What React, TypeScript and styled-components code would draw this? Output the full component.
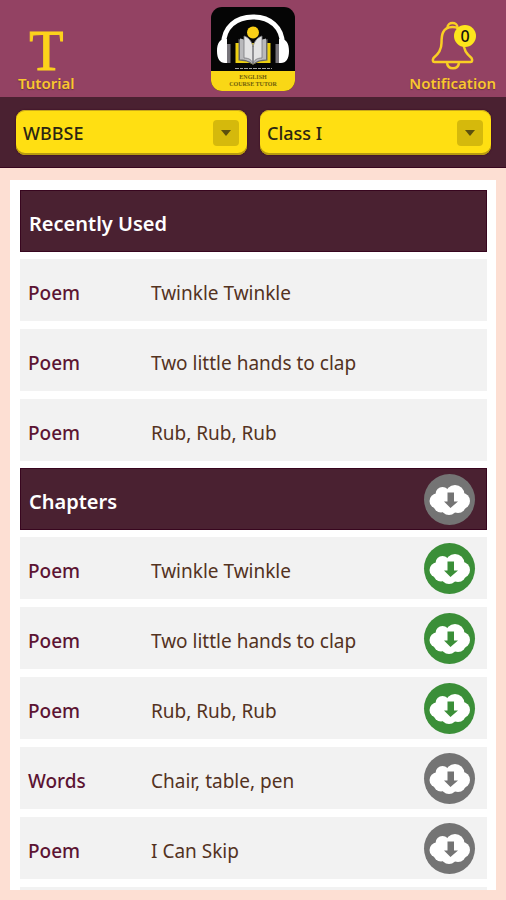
import React from "react";
import styled, { createGlobalStyle } from "styled-components";

const color = {
  plum: "#934263",
  wine: "#4a2131",
  wineEdge: "#38061f",
  yellow: "#ffdf12",
  gold: "#f9c62f",
  blush: "#fddfd3",
  row: "#f2f2f2",
  kind: "#5c1433",
  title: "#54331f",
  green: "#3b8f38",
  grey: "#747474",
};

const GlobalStyle = createGlobalStyle`
  * { box-sizing: border-box; }
  body { margin: 0; background: ${color.blush}; font-family: "Noto Sans", "Open Sans", sans-serif; }
  button, select { font: inherit; }
`;

const Screen = styled.div`
  display: flex;
  flex-direction: column;
  height: 100vh;
`;

const TopBar = styled.header`
  display: grid;
  grid-template-columns: 1fr auto 1fr;
  height: 97px;
  padding: 0 10px 4px;
  background: ${color.plum};
`;

const NavButton = styled.button<{ $side: "start" | "end" }>`
  display: flex;
  flex-direction: column;
  align-items: center;
  justify-content: flex-end;
  justify-self: ${(p) => p.$side};
  padding: 0 0 0 8px;
  border: 0;
  background: none;
  color: ${color.gold};
  cursor: pointer;
`;

const NavLabel = styled.span`
  font-size: 15px;
  font-weight: 600;
  line-height: 20px;
  text-shadow: 0 1px 1px rgba(74, 33, 49, 0.5);
`;

const Glyph = styled.span`
  color: #fcd21c;
  font-family: "Liberation Serif", serif;
  font-size: 56px;
  font-weight: 400;
  line-height: 44px;
  -webkit-text-stroke: 1px #fcd21c;
`;

const Logo = styled.svg`
  display: block;
  width: 84px;
  height: 84px;
  margin-top: 7px;
`;

const Bell = styled.svg`
  display: block;
  width: 52px;
  height: 52px;
  margin-bottom: 3px;
`;

const FilterBar = styled.form`
  display: grid;
  grid-template-columns: 1fr 1fr;
  gap: 13px;
  height: 71px;
  flex: none;
  padding: 13px 15px 12px 16px;
  background: ${color.wine};
  border-bottom: 1px solid ${color.wineEdge};
`;

const Field = styled.label`
  display: grid;
  align-items: center;
  height: 45px;
  border-radius: 9px;
  background: ${color.yellow};
  box-shadow: inset 0 -2px 0 #b89b10, inset 0 1px 0 #c9a91a, 0 0 2px ${color.wineEdge};
  & > * { grid-area: 1 / 1; }
`;

const Picker = styled.select`
  width: 100%;
  height: 45px;
  padding: 0 40px 0 7px;
  border: 0;
  background: none;
  color: #2b2612;
  font-size: 18px;
  font-weight: 500;
  appearance: none;
  cursor: pointer;
`;

const Arrow = styled.span`
  display: grid;
  place-items: center;
  justify-self: end;
  width: 26px;
  height: 26px;
  margin-right: 8px;
  border-radius: 4px;
  background: #d5b90c;
  pointer-events: none;
`;

const Panel = styled.main`
  flex: 1;
  min-height: 0;
  margin: 12px 10px 10px;
  padding: 10px 9px 0 10px;
  background: #fff;
  overflow-y: auto;
  scrollbar-width: none;
`;

const Section = styled.section`
  display: flex;
  flex-direction: column;
  gap: 7px;
  margin-bottom: 7px;
`;

const SectionHead = styled.div`
  display: flex;
  align-items: center;
  justify-content: space-between;
  height: 62px;
  padding: 0 11px 0 8px;
  background: ${color.wine};
  border: 1px solid ${color.wineEdge};
`;

const Heading = styled.h2`
  margin: 0;
  padding-top: 4px;
  color: #fff;
  font-size: 20px;
  font-weight: 600;
`;

const List = styled.ul`
  display: flex;
  flex-direction: column;
  gap: 8px;
  margin: 0;
  padding: 0;
  list-style: none;
`;

const Row = styled.li`
  display: grid;
  grid-template-columns: 123px 1fr auto;
  align-items: center;
  height: 62px;
  padding: 0 12px 0 8px;
  background: ${color.row};
  font-size: 19px;
`;

const Kind = styled.span`
  padding-top: 5px;
  color: ${color.kind};
  font-weight: 500;
`;

const Title = styled.span`
  padding-top: 5px;
  color: ${color.title};
`;

const RoundButton = styled.button<{ $saved?: boolean }>`
  width: 51px;
  height: 51px;
  padding: 0;
  border: 0;
  border-radius: 50%;
  background: ${(p) => (p.$saved ? color.green : color.grey)};
  color: ${(p) => (p.$saved ? color.green : color.grey)};
  cursor: pointer;
  svg { display: block; }
`;

function Download({ saved, label }: { saved?: boolean; label: string }) {
  return (
    <RoundButton type="button" $saved={saved} aria-label={label}>
      <svg width="51" height="51" viewBox="0 0 51 51" aria-hidden="true">
        <g fill="#fff">
          <circle cx="13" cy="27" r="7.500" />
          <circle cx="18.500" cy="20" r="7" />
          <circle cx="31" cy="20.500" r="9.500" />
          <circle cx="38" cy="27" r="8" />
          <circle cx="17" cy="31" r="7.500" />
          <circle cx="25" cy="33" r="8" />
          <circle cx="34" cy="31" r="8" />
          <path d="M12 21h28v12H12z" />
        </g>
        <path d="M23.500 18.500h6.500v9h4L26.500 34 20 27.500h3.500z" fill="currentColor" />
      </svg>
    </RoundButton>
  );
}

function AppLogo() {
  return (
    <Logo viewBox="0 0 84 84" role="img" aria-label="English Course Tutor">
      <defs>
        <clipPath id="tile"><rect width="84" height="84" rx="11" /></clipPath>
      </defs>
      <g clipPath="url(#tile)">
        <rect width="84" height="84" fill="#050505" />
        <rect y="64" width="84" height="20" fill="#f9d716" />
      </g>
      <path d="M12.500 38C12.500 20 25 10 42 10S71.500 20 71.500 38" fill="none" stroke="#fff" strokeWidth="5" />
      <path d="M14 32c-5 0-8 4-8 12s3 12 8 12h2V32zM70 32c5 0 8 4 8 12s-3 12-8 12h-2V32z" fill="#fff" />
      <path d="M16 37h3.500v19H16zM64.500 37H68v19h-3.500z" fill="#77747a" />
      <circle cx="42" cy="25.500" r="6" fill="#f9cf16" />
      <path d="M24.500 36H59.500v20H45l-3 1.500L39 56H24.500z" fill="#ecd012" />
      <path d="M27.500 32l8 3 6.500 7 6.500-7 8-3v21.500l-8 1-6.500 3-6.500-3-8-1z" fill="#68686c" />
      <path d="M29 31.500c6 1 11 4 13 9 2-5 7-8 13-9v21c-6 0-11 2-13 5-2-3-7-5-13-5z" fill="#b9b9bc" />
      <path d="M33 29c4 1 8 5 9 11 1-6 5-10 9-11v22c-5 0-8 2-9 6-1-4-4-6-9-6z" fill="#e3e3e4" stroke="#77777c" strokeWidth="0.800" />
      <path d="M42 39v18" stroke="#77777c" strokeWidth="1.500" />
      <path d="M24 61.500h37" stroke="#a5a5a5" strokeDasharray="4 1 3 1" />
      <g fill="#6d5c0a" fontFamily="Liberation Serif, serif" fontWeight="700" textAnchor="middle">
        <text x="42" y="72" fontSize="6">ENGLISH</text>
        <text x="42" y="79" fontSize="6">COURSE TUTOR</text>
      </g>
    </Logo>
  );
}

function BellIcon() {
  return (
    <Bell viewBox="0 0 52 52" aria-hidden="true">
      <g fill="none" stroke="#f9cf24" strokeWidth="2.500" strokeLinejoin="round">
        <path d="M20.500 9.500c0-6 10-6 10 0" />
        <path d="M25.500 9C15 9 14.500 18 14.500 25c0 7-3 11-8 15-1 2-1 4 1 4h36c2 0 2-2 1-4-5-4-8-8-8-15 0-7-.5-16-11-16z" />
        <path d="M20 45c1 7 11 7 12 0" />
      </g>
      <circle cx="38" cy="18" r="11" fill="#fde51c" />
      <text x="38" y="24" textAnchor="middle" fontSize="16" fontWeight="500" fill="#16140c">0</text>
    </Bell>
  );
}

function Select({ name, options }: { name: string; options: string[] }) {
  return (
    <Field>
      <Picker aria-label={name} defaultValue={options[0]}>
        {options.map((o) => <option key={o}>{o}</option>)}
      </Picker>
      <Arrow>
        <svg width="10" height="6" viewBox="0 0 10 6" aria-hidden="true">
          <path d="M0 0h10L5 6z" fill="#5c500d" />
        </svg>
      </Arrow>
    </Field>
  );
}

type Item = { kind: string; title: string; saved?: boolean };

const recent: Item[] = [
  { kind: "Poem", title: "Twinkle Twinkle" },
  { kind: "Poem", title: "Two little hands to clap" },
  { kind: "Poem", title: "Rub, Rub, Rub" },
];

const chapters: Item[] = [
  ...recent.map((item) => ({ ...item, saved: true })),
  { kind: "Words", title: "Chair, table, pen" },
  { kind: "Poem", title: "I Can Skip" },
];

export default function App() {
  return (
    <>
      <GlobalStyle />
      <Screen>
        <TopBar>
          <NavButton type="button" $side="start">
            <Glyph aria-hidden="true">T</Glyph>
            <NavLabel>Tutorial</NavLabel>
          </NavButton>
          <AppLogo />
          <NavButton type="button" $side="end">
            <BellIcon />
            <NavLabel>Notification</NavLabel>
          </NavButton>
        </TopBar>
        <FilterBar>
          <Select name="Board" options={["WBBSE"]} />
          <Select name="Class" options={["Class I"]} />
        </FilterBar>
        <Panel>
          <Section>
            <SectionHead><Heading>Recently Used</Heading></SectionHead>
            <List>
              {recent.map((item) => (
                <Row key={item.title}>
                  <Kind>{item.kind}</Kind>
                  <Title>{item.title}</Title>
                </Row>
              ))}
            </List>
          </Section>
          <Section>
            <SectionHead>
              <Heading>Chapters</Heading>
              <Download label="Download all chapters" />
            </SectionHead>
            <List>
              {chapters.map((item) => (
                <Row key={item.title}>
                  <Kind>{item.kind}</Kind>
                  <Title>{item.title}</Title>
                  <Download saved={item.saved} label={`Download ${item.title}`} />
                </Row>
              ))}
              <Row />
            </List>
          </Section>
        </Panel>
      </Screen>
    </>
  );
}
